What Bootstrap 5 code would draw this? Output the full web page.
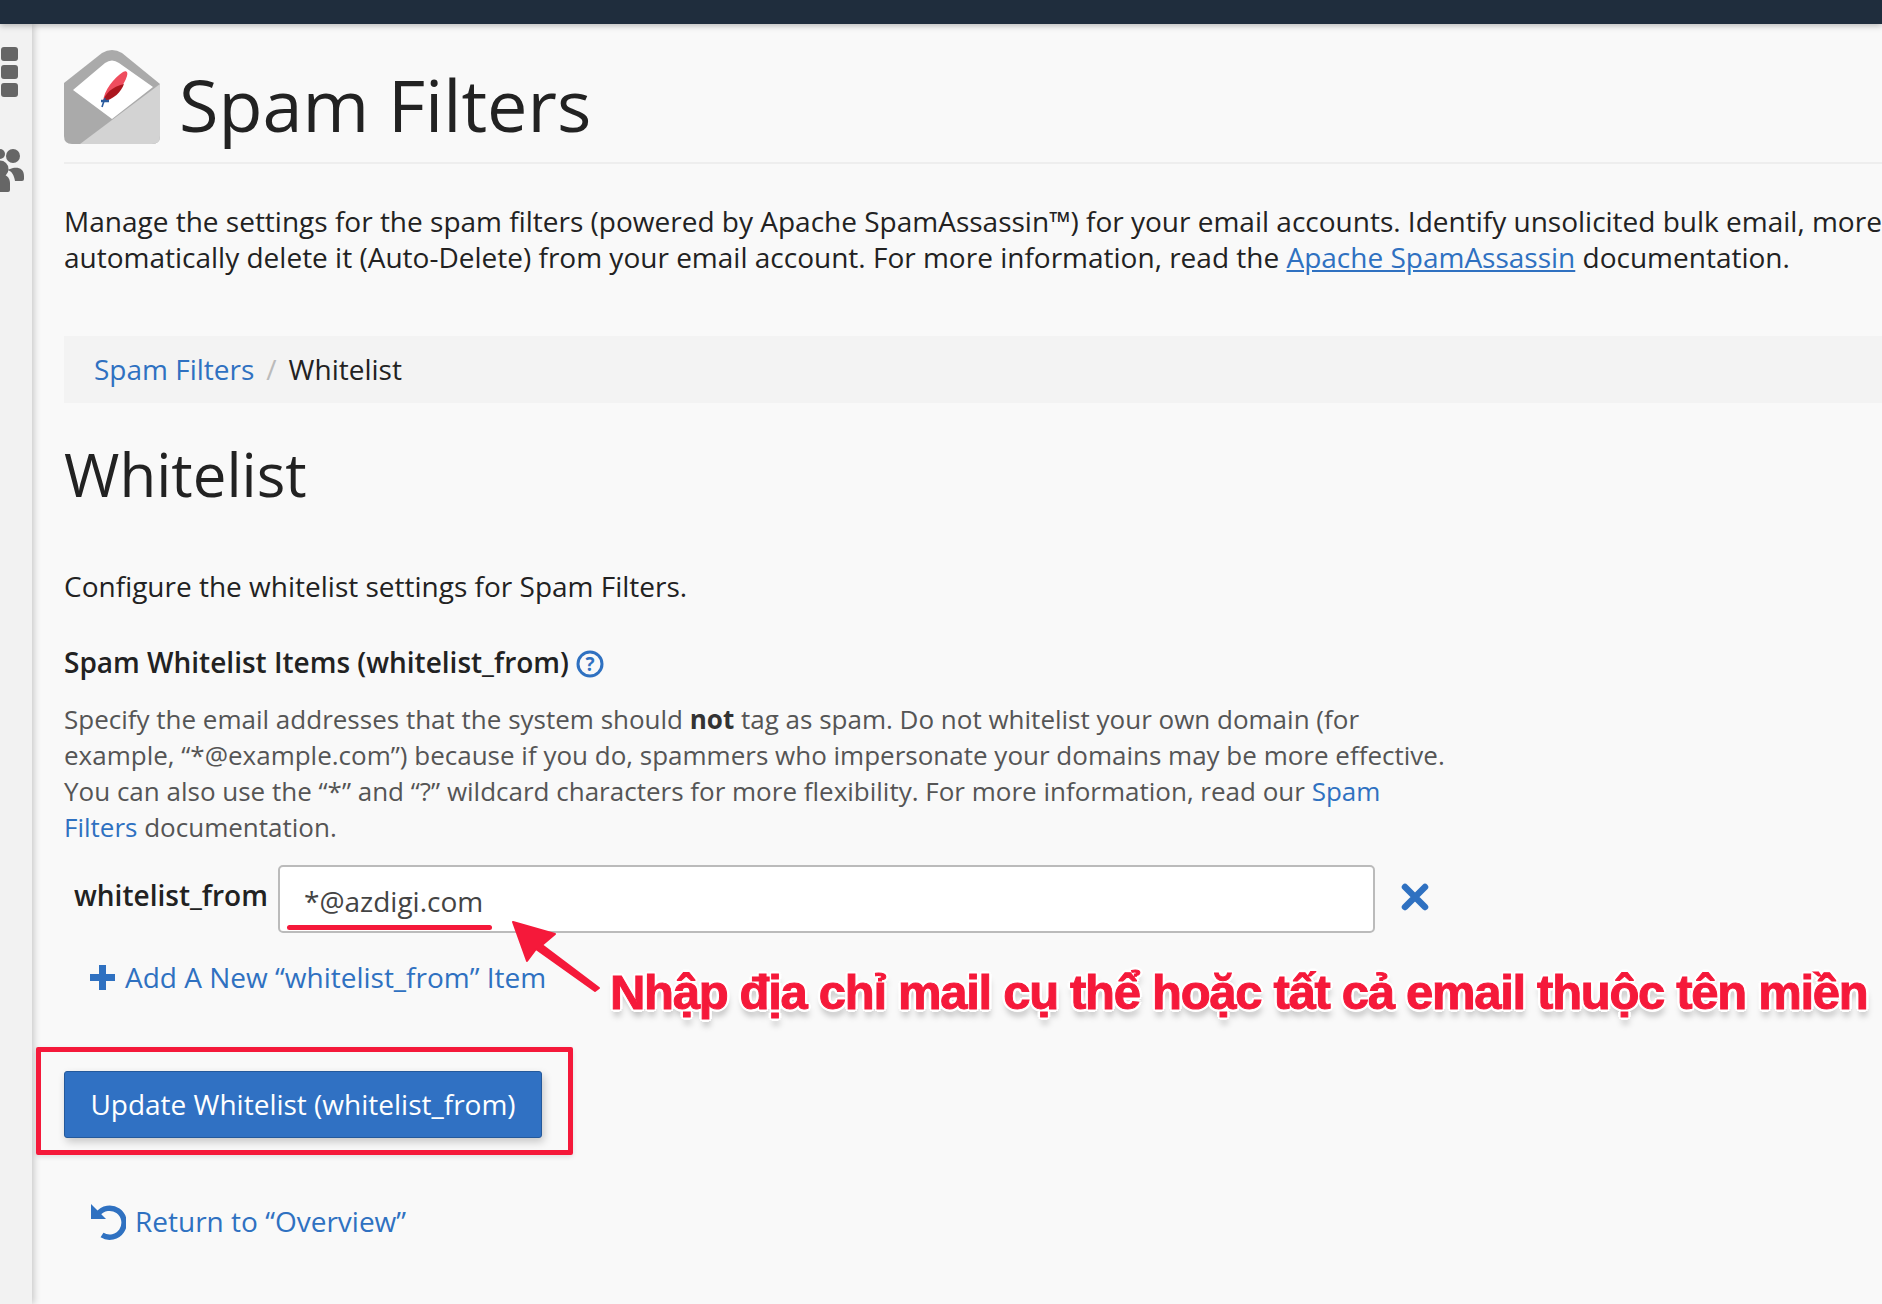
<!doctype html>
<html lang="en"><head><meta charset="utf-8"><title>Spam Filters</title>
<link href="https://cdn.jsdelivr.net/npm/bootstrap@5.3.0/dist/css/bootstrap.min.css" rel="stylesheet">
<style>
html,body{height:100%;overflow:hidden}
body{font-family:"Open Sans","Noto Sans",sans-serif;font-size:28px;line-height:36px;color:#222;background:#f9f9f9;position:relative}
a{color:#2f71c1;text-decoration:none}
.topstrip{height:24px;background:#1f2d3d;box-shadow:0 2px 6px rgba(0,0,0,.25);position:relative;z-index:3}
.shell{height:1280px}
.sidestrip{width:32px;flex:none;background:#f2f2f2;box-shadow:2px 0 7px rgba(0,0,0,.2);position:relative;z-index:2;overflow:hidden}
.sq{width:17px;height:14px;border-radius:3px;background:#666;margin-bottom:4px}
.sq-stack{padding-top:23px;padding-left:1px}
.people{margin-top:52px;display:block}
.mainpane{flex:1;min-width:0;padding-left:32px;padding-top:26px}
.pagehead{border-bottom:2px solid #eee;height:114px;gap:19px;align-items:flex-start}
.pagehead svg{flex:none}
.pagetitle{font-size:72px;line-height:80px;font-weight:400;margin:14px 0 0;color:#222}
.intro{white-space:nowrap;margin:39px 0 0}
.intro a{text-decoration:underline}
.crumbs{background:#f3f3f3;height:67px;margin:61px 0 0;padding:0 30px 2px;align-items:center;--bs-breadcrumb-divider-color:#bbb;--bs-breadcrumb-item-active-color:#222;--bs-breadcrumb-item-padding-x:12px}
.subtitle{font-size:60px;line-height:60px;font-weight:400;margin:41px 0 0;color:#222}
.lede{margin:64px 0 0}
.fieldhead{font-weight:600;font-size:28px;line-height:36px;margin:40px 0 0}
.fieldhead svg{vertical-align:-5px;margin-left:0}
.explain{color:#555;font-size:26px;margin:21px 0 0;width:1390px}
.explain b{color:#333;font-weight:700}
.wlrow{margin-top:20px;height:68px}
.wllabel{font-weight:600;width:214px;padding-left:10px;flex:none;margin-top:-8px}
.wlinput{width:1097px;height:68px;flex:none;border:2px solid #bbb;border-radius:5px;font-size:28px;color:#444;padding:4px 24px 0;background:#fff;box-shadow:none}
.wlx{margin-left:26px;margin-top:-4px}
.addlink{margin:26px 0 0 26px;gap:10px}
.upbtn{--bs-btn-bg:#3071c3;--bs-btn-border-color:#24599b;--bs-btn-color:#fff;--bs-btn-font-size:28px;--bs-btn-border-radius:3px;width:478px;height:67px;margin-top:74px;box-shadow:2px 4px 8px rgba(0,0,0,.2);padding:0;font-family:inherit;display:block}
.retlink{margin:65px 0 0 26px;gap:9px}
.red-box{position:absolute;left:36px;top:1047px;width:537px;height:108px;border:5px solid #f5193a;border-radius:2px;z-index:5;box-shadow:0 2px 5px rgba(0,0,0,.1)}
.red-line{position:absolute;left:287px;top:925px;width:205px;height:5px;border-radius:3px;background:#f5193a;z-index:5}
.red-arrow{position:absolute;left:505px;top:915px;z-index:5}
.red-note{position:absolute;left:610px;top:957px;white-space:nowrap;z-index:5;font-family:"Liberation Sans",sans-serif;font-weight:700;font-size:49px;letter-spacing:-1.3px;line-height:70px;color:#f5193a;-webkit-text-stroke:1px #f5193a;text-shadow:2px 0 #fff,-2px 0 #fff,0 2px #fff,0 -2px #fff,2px 2px #fff,-2px 2px #fff,2px -2px #fff,-2px -2px #fff,3px 0 #fff,-3px 0 #fff,0 3px #fff,0 -3px #fff,1px 7px 6px rgba(0,0,0,.25)}
</style></head>
<body>
<div class="topstrip"></div>
<div class="shell d-flex">
  <div class="sidestrip">
    <div class="sq-stack"><div class="sq"></div><div class="sq"></div><div class="sq"></div></div>
    <svg class="people" width="26" height="44" viewBox="0 0 26 44" fill="#666"><circle cx="13" cy="7" r="7"/><circle cx="0" cy="5" r="5"/><circle cx="0" cy="20" r="8.500"/><path d="M-8 43V33c0-6 5-8 9-8s9 3 9 9v7q0 2-2 2z"/><path d="M13 19c6-1 11 1 11 8v3q0 2-2 2h-7c-1-6-3-10-8-11z"/></svg>
  </div>
  <main class="mainpane">
    <div class="pagehead d-flex">
      <svg width="96" height="94" viewBox="0 0 96 94"><path d="M0 33 38 3q10-6 20 0l38 31v52q0 8-8 8H8q-8 0-8-8z" fill="#aaa"/><path d="M9 40 41 13q7-5 14 0l34 24-41 32z" fill="#fff"/><path d="M96 34V86q0 8-8 8H16z" fill="#d3d3d3"/><path d="M39 52C40 40 50 28 59 22c4-2 5 1 4 4-3 10-12 20-24 26z" fill="#ef4d5e"/><path d="M39 52c2-9 9-15 21-18-3 8-10 15-21 18z" fill="#ab161e"/><path d="M41 48 38 57" stroke="#2b5c9e" stroke-width="1.600"/><path d="M37 51h8" stroke="#2b5c9e" stroke-width="2.500"/></svg>
      <h1 class="pagetitle">Spam Filters</h1>
    </div>
    <p class="intro">Manage the settings for the spam filters (powered by Apache SpamAssassin™) for your email accounts. Identify unsolicited bulk email, more<br>automatically delete it (Auto-Delete) from your email account. For more information, read the <a href="#">Apache SpamAssassin</a> documentation.</p>
    <ol class="breadcrumb crumbs d-flex">
      <li class="breadcrumb-item"><a href="#">Spam Filters</a></li>
      <li class="breadcrumb-item active">Whitelist</li>
    </ol>
    <h2 class="subtitle">Whitelist</h2>
    <p class="lede">Configure the whitelist settings for Spam Filters.</p>
    <h3 class="fieldhead">Spam Whitelist Items (whitelist_from) <svg width="28" height="28" viewBox="0 0 28 28"><circle cx="14" cy="14" r="12" fill="none" stroke="#2f71c1" stroke-width="3"/><text x="14" y="21" text-anchor="middle" font-family="Open Sans" font-size="19" font-weight="700" fill="#2f71c1">?</text></svg></h3>
    <p class="explain">Specify the email addresses that the system should <b>not</b> tag as spam. Do not whitelist your own domain (for example, “*@example.com”) because if you do, spammers who impersonate your domains may be more effective. You can also use the “*” and “?” wildcard characters for more flexibility. For more information, read our <a href="#">Spam Filters</a> documentation.</p>
    <div class="wlrow d-flex align-items-center">
      <label class="wllabel">whitelist_from</label>
      <input class="form-control wlinput" value="*@azdigi.com">
      <svg class="wlx" width="28" height="28" viewBox="0 0 28 28"><path d="M4 4 24 24M24 4 4 24" stroke="#2f71c1" stroke-width="6.500" stroke-linecap="round"/></svg>
    </div>
    <a href="#" class="addlink d-inline-flex align-items-center"><svg width="25" height="25" viewBox="0 0 25 25"><path d="M12.500 0v25M0 12.500h25" stroke="#2f71c1" stroke-width="7"/></svg>Add A New “whitelist_from” Item</a>
    <button type="button" class="btn btn-primary upbtn">Update Whitelist (whitelist_from)</button>
    <a href="#" class="retlink d-inline-flex align-items-center"><svg width="36" height="37" viewBox="0 0 36 37"><path d="M8 11A14.500 14.500 0 1 1 12 32" fill="none" stroke="#2f71c1" stroke-width="5.500"/><path d="M1 1V16H16z" fill="#2f71c1"/></svg>Return to “Overview”</a>
  </main>
</div>
<div class="red-box"></div>
<div class="red-line"></div>
<svg class="red-arrow" width="100" height="80" viewBox="0 0 100 80"><path d="M8 7 50 19 37 30 94 73 90 76 31 34 22 46z" fill="#f5193a" stroke="#f5193a" stroke-width="2" stroke-linejoin="round"/></svg>
<div class="red-note">Nhập địa chỉ mail cụ thể hoặc tất cả email thuộc tên miền</div>
<script src="https://cdn.jsdelivr.net/npm/bootstrap@5.3.0/dist/js/bootstrap.bundle.min.js"></script>
</body></html>
